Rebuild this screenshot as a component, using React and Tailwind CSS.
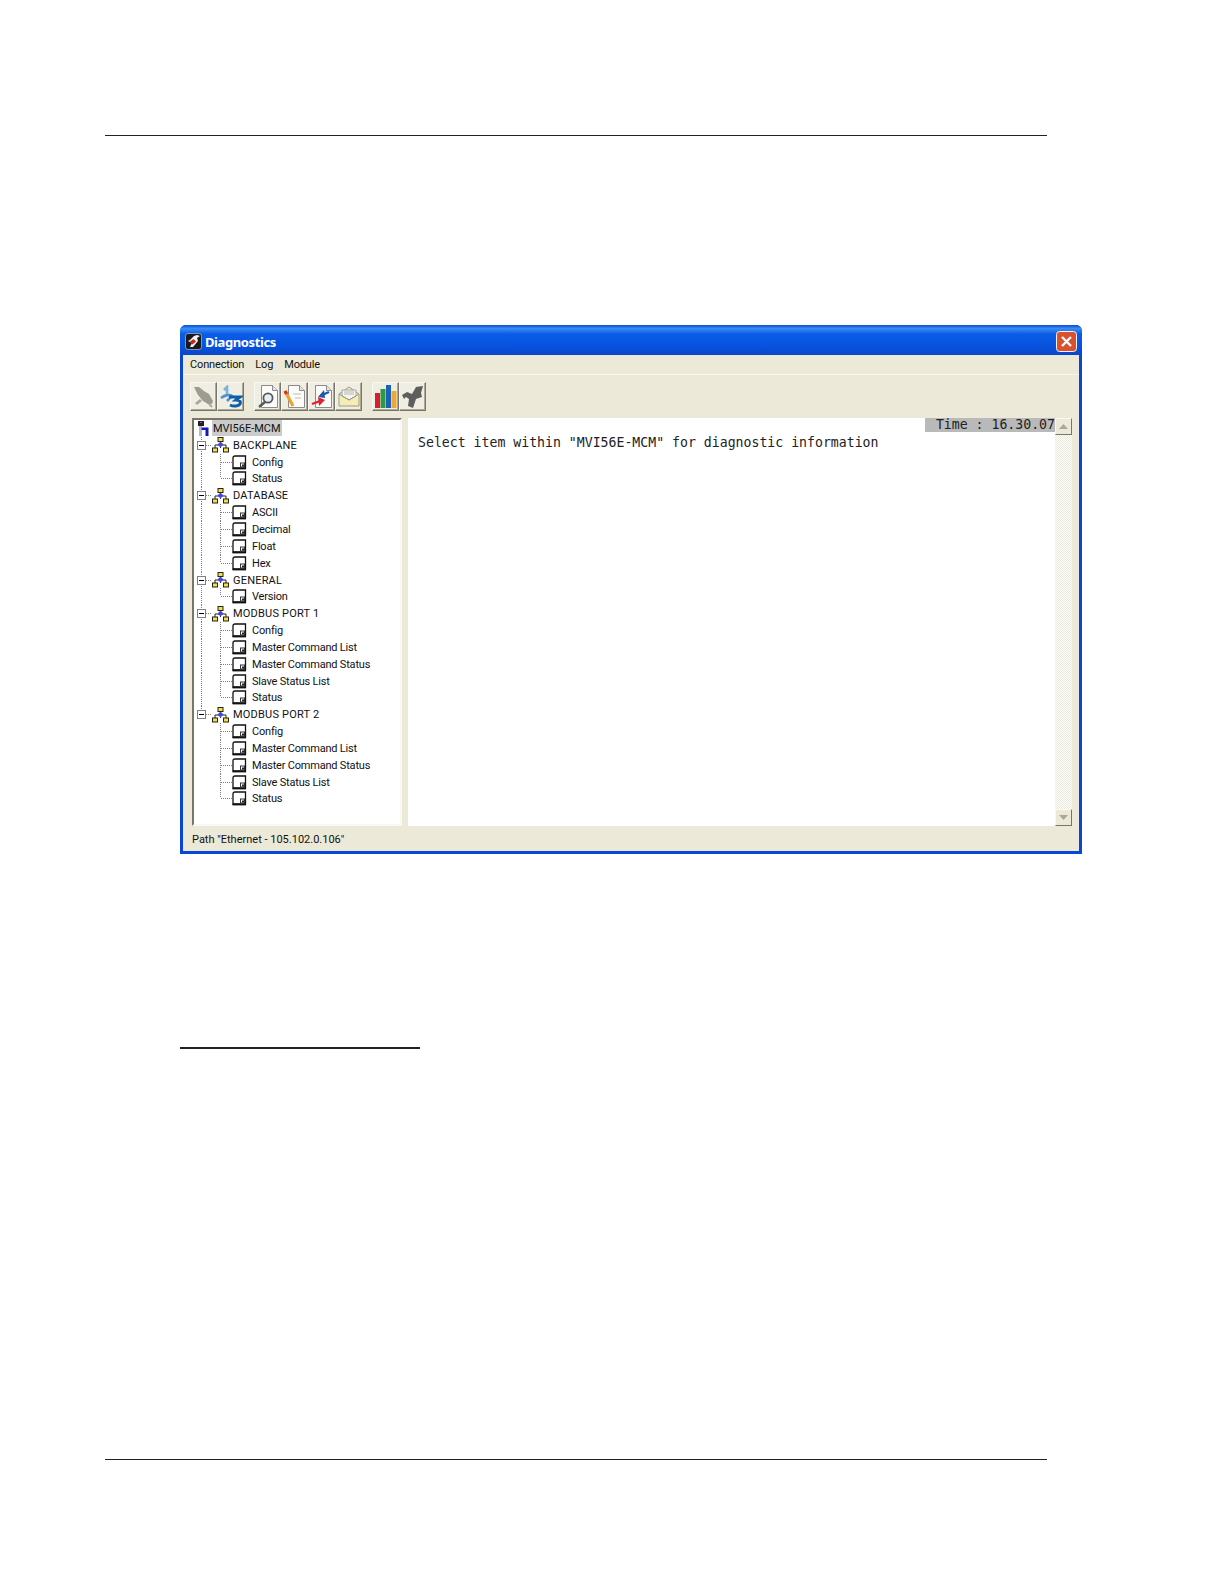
import React from "react";

const treeData = [
  { label: "BACKPLANE", children: ["Config", "Status"] },
  { label: "DATABASE", children: ["ASCII", "Decimal", "Float", "Hex"] },
  { label: "GENERAL", children: ["Version"] },
  {
    label: "MODBUS PORT 1",
    children: ["Config", "Master Command List", "Master Command Status", "Slave Status List", "Status"],
  },
  {
    label: "MODBUS PORT 2",
    children: ["Config", "Master Command List", "Master Command Status", "Slave Status List", "Status"],
  },
];

const DOT = { stroke: "#808080", strokeWidth: 1, strokeDasharray: "1 1" };

const TitleIcon = () => (
  <svg width="17" height="17" viewBox="0 0 17 17">
    <rect x="0.5" y="0.5" width="16" height="16" rx="2.5" fill="#1a1a1a" stroke="#c8d4ee" strokeWidth="0.6" />
    <path d="M3 8l2-1 4-4 3-1 3 1-3 2 1 3-5 6-3 0 2-4-2-1z" fill="#f4f4f4" />
    <path d="M5 8.5l3.5-2.5 2.5 2.5-3.5 3z" fill="#d0202a" />
  </svg>
);

const CloseIcon = () => (
  <svg width="21" height="21" viewBox="0 0 21 21">
    <rect x="0.5" y="0.5" width="20" height="20" rx="3" fill="#d9512f" stroke="#f4f4f4" />
    <path d="M6 6l9 9M15 6l-9 9" stroke="#fff" strokeWidth="2.4" />
  </svg>
);

const PlugIcon = () => (
  <svg width="24" height="24" viewBox="0 0 24 24">
    <path d="M2 2l5 0 5 4 5 3 4 7-1 3-4 0-5-3-5-6z" fill="#9c9c90" />
    <path d="M3 18l5-4 2 2-5 4z" fill="#a8a89c" />
    <path d="M17 19l3 3" stroke="#a8a89c" strokeWidth="2" />
  </svg>
);

const NumbersIcon = () => (
  <svg width="24" height="23" viewBox="0 0 24 23">
    <path d="M5 5l3-3v8" stroke="#7eb2dc" strokeWidth="2.6" fill="none" />
    <path d="M2 13c4-3 9-4 11-2l-5 5" stroke="#4c94d0" strokeWidth="2.6" fill="none" />
    <path d="M10 12h11l-4 3c4 0 5 2 4 4-1 2-6 3-10 1" stroke="#0d5ea8" strokeWidth="3" fill="none" />
  </svg>
);

const PageBase = ({ children }) => (
  <svg width="24" height="25" viewBox="0 0 24 25">
    <path d="M5.5 1.5h11l5 5v17h-16z" fill="#fbfbf8" stroke="#8a8a90" />
    <path d="M16.5 1.5v5h5" fill="#e4e4e0" stroke="#8a8a90" />
    {children}
  </svg>
);

const Toolbar = {
  plug: <PlugIcon />,
  numbers: <NumbersIcon />,
  search: (
    <PageBase>
      <circle cx="12" cy="14" r="4.6" fill="#e8eef2" stroke="#55585c" strokeWidth="1.8" />
      <path d="M9 18l-6 5" stroke="#55585c" strokeWidth="2.4" />
    </PageBase>
  ),
  note: (
    <PageBase>
      <path d="M2 7l8 15" stroke="#f0a030" strokeWidth="3.2" />
      <path d="M2 7l1.6 3" stroke="#d83020" strokeWidth="3.2" />
      <path d="M10 10h8M12 14h6" stroke="#b8b8b8" />
    </PageBase>
  ),
  transfer: (
    <PageBase>
      <path d="M19 8l-7 3" stroke="#1c5ab0" strokeWidth="2.4" />
      <path d="M8 13l6-7 1 8z" fill="#1c5ab0" />
      <path d="M2 20l8-3" stroke="#e02030" strokeWidth="2.4" />
      <path d="M15 16l-7-3 1 9z" fill="#e02030" />
    </PageBase>
  ),
  mail: (
    <svg width="24" height="23" viewBox="0 0 24 23">
      <path d="M2 9l10-7 10 7v12H2z" fill="#f4eeb4" stroke="#9a9a88" />
      <path d="M5 11V5h14v6l-7 4z" fill="#f4f4f0" stroke="#a8a8a0" />
      <path d="M7 7h10M7 9h10" stroke="#b8b8b8" />
      <path d="M2 9l10 6 10-6" fill="none" stroke="#9a9a88" />
    </svg>
  ),
  chart: (
    <svg width="24" height="25" viewBox="0 0 24 25">
      <rect x="1" y="9" width="5" height="15" fill="#d8202c" />
      <rect x="6.5" y="5" width="5" height="19" fill="#2c9a40" />
      <rect x="12" y="1" width="5" height="23" fill="#1c60b8" />
      <rect x="17.5" y="7" width="5" height="17" fill="#eea838" />
    </svg>
  ),
  wrench: (
    <svg width="24" height="24" viewBox="0 0 24 24">
      <path d="M1 10l5-3 5 2 4-7 7-1-2 7 1 4-6 2-3 9-5-2 1-7-3-2-2 2z" fill="#5e5e5c" />
    </svg>
  ),
};

const ToolButton = ({ icon }) => (
  <div className="w-[27px] h-[29px] flex items-center justify-center bg-[#f0eee2] border border-t-[#f8f8f2] border-l-[#f8f8f2] border-r-[#77766a] border-b-[#77766a] shadow-[inset_-1px_-1px_0_#aca899]">
    {Toolbar[icon]}
  </div>
);

const NetworkIcon = () => (
  <svg width="17" height="16" viewBox="0 0 17 16" className="shrink-0">
    <path d="M8.5 4v4M3 11V8h11v3M8.5 8v3" stroke="#222" fill="none" />
    <path d="M8.5 4.5l3 3-3 3-3-3z" fill="#4848d8" />
    <rect x="6" y="0.5" width="5" height="4" fill="#f4e040" stroke="#222" />
    <rect x="0.5" y="11" width="5" height="4" fill="#f4e040" stroke="#222" />
    <rect x="11.5" y="11" width="5" height="4" fill="#f4e040" stroke="#222" />
  </svg>
);

const DocIcon = () => (
  <svg width="15" height="15" viewBox="0 0 15 15" className="shrink-0">
    <path d="M1 3q0-2 2-2h10.5v12H1z" fill="#fff" stroke="#111" strokeWidth="1.3" />
    <path d="M0.5 13.5h13.5" stroke="#111" strokeWidth="1.8" />
    <rect x="8.5" y="8" width="4" height="4" fill="#fff" stroke="#333" />
    <rect x="10" y="9.5" width="2" height="2" fill="#222" />
  </svg>
);

const RootIcon = () => (
  <svg width="12" height="15" viewBox="0 0 12 15" className="shrink-0">
    <rect x="0" y="0" width="6" height="5" fill="#222" />
    <rect x="2" y="1" width="2" height="1" fill="#d04040" />
    <rect x="1" y="5" width="3" height="10" fill="#b8b8cc" />
    <path d="M3.5 6.5h7v8.5H7.5v-6h-4z" fill="#1818b8" />
  </svg>
);

// dotted connectors live in the row's own indent column
const GroupRow = ({ label, last }) => (
  <div className="flex items-center h-[16.85px]">
    <div className="relative w-[18px] h-full shrink-0">
      <svg width="18" height="17" className="absolute left-0 top-0 overflow-visible">
        <path d={last ? "M7.5 0V8" : "M7.5 0V17"} {...DOT} />
        <path d="M12 8.5h6" {...DOT} />
      </svg>
      <div className="absolute left-[3px] top-[4px] w-[9px] h-[9px] bg-white border border-[#808080] flex items-center justify-center">
        <div className="w-[5px] h-px bg-black" />
      </div>
    </div>
    <NetworkIcon />
    <span className="ml-[4px] whitespace-nowrap tracking-[0.2px]">{label}</span>
  </div>
);

const ChildRow = ({ label, lastChild, lastGroup }) => (
  <div className="flex items-center h-[16.85px]">
    <svg width="38" height="17" className="shrink-0">
      {!lastGroup && <path d="M7.5 0V17" {...DOT} />}
      <path d={lastChild ? "M26.5 0V8" : "M26.5 0V17"} {...DOT} />
      <path d="M27 8.5h11" {...DOT} />
    </svg>
    <DocIcon />
    <span className="ml-[5px] whitespace-nowrap tracking-[-0.2px]">{label}</span>
  </div>
);

const Tree = () => (
  <div className="w-[210px] h-[408px] bg-white border-t-2 border-l-2 border-t-[#77766a] border-l-[#77766a] border-r-2 border-b-2 border-r-[#f8f8f4] border-b-[#f8f8f4] text-[11px] leading-none text-[#111] font-['Roboto',sans-serif]">
    <div className="flex items-center h-[16.85px] pl-[4px]">
      <RootIcon />
      <span className="ml-[2px] h-[16px] flex items-center px-[1px] bg-[#cbcbcb] whitespace-nowrap">MVI56E-MCM</span>
    </div>
    {treeData.map((group, g) => (
      <div key={group.label + g}>
        <GroupRow label={group.label} last={g === treeData.length - 1} />
        {group.children.map((child, i) => (
          <ChildRow
            key={child + i}
            label={child}
            lastChild={i === group.children.length - 1}
            lastGroup={g === treeData.length - 1}
          />
        ))}
      </div>
    ))}
  </div>
);

const ScrollButton = ({ up }) => (
  <div className="w-[17px] h-[17px] flex items-center justify-center bg-[#ece9d8] border border-t-[#f8f8f2] border-l-[#f8f8f2] border-r-[#77766a] border-b-[#77766a] shrink-0">
    <svg width="9" height="5" viewBox="0 0 9 5">
      <path d={up ? "M4.5 0L9 5H0z" : "M0 0h9L4.5 5z"} fill="#aca899" />
    </svg>
  </div>
);

const OutputPane = () => (
  <div className="relative flex-1 h-[408px] bg-white flex">
    <div className="flex-1 pl-[10px] pt-[17px] font-['DejaVu_Sans_Mono',monospace] text-[13.2px] leading-[16px] text-[#222] whitespace-pre">
      Select item within "MVI56E-MCM" for diagnostic information
    </div>
    <div className="absolute right-[17px] top-0 w-[130px] h-[14px] bg-[#b9b9b9] font-['DejaVu_Sans_Mono',monospace] text-[13.2px] leading-[14px] text-right text-[#222] whitespace-pre">
      Time : 16.30.07
    </div>
    <div className="w-[17px] flex flex-col bg-[repeating-conic-gradient(#ece9d8_0%_25%,#ffffff_0%_50%)] bg-[length:2px_2px]">
      <ScrollButton up />
      <div className="flex-1" />
      <ScrollButton />
    </div>
  </div>
);

const DiagnosticsWindow = () => (
  <div className="w-[902px] h-[529px] ml-[180px] mt-[189px] flex flex-col rounded-t-[6px] bg-[#0a3fd0] border-x-[3px] border-b-[3px] border-[#0a46d6]">
    <div className="h-[30px] -mx-[3px] px-[5px] pt-[2px] flex items-center justify-between rounded-t-[6px] bg-[linear-gradient(to_bottom,#0a4ad0_0%,#3a8cf4_12%,#0a5ce6_30%,#0653de_70%,#0a48c8_100%)]">
      <div className="flex items-center gap-[3px]">
        <TitleIcon />
        <span className="pt-[4px] text-white text-[13px] tracking-[-0.4px] font-bold font-['Noto_Sans',sans-serif]">Diagnostics</span>
      </div>
      <CloseIcon />
    </div>
    <div className="flex-1 bg-[#ece9d8] flex flex-col">
      <div className="h-[20px] pl-[7px] pt-[2px] flex items-center gap-[11px] border-b border-b-[#f8f8f2] text-[11px] tracking-[-0.15px] text-[#111] font-['Roboto',sans-serif]">
        <span>Connection</span>
        <span>Log</span>
        <span>Module</span>
      </div>
      <div className="h-[43px] pl-[7px] pt-[7px] flex items-start">
        <ToolButton icon="plug" />
        <ToolButton icon="numbers" />
        <div className="w-[10px]" />
        <ToolButton icon="search" />
        <ToolButton icon="note" />
        <ToolButton icon="transfer" />
        <ToolButton icon="mail" />
        <div className="w-[10px]" />
        <ToolButton icon="chart" />
        <ToolButton icon="wrench" />
      </div>
      <div className="flex pl-[9px] pr-[7px] gap-[6px]">
        <Tree />
        <OutputPane />
      </div>
      <div className="flex-1 pl-[9px] pt-[4px] flex items-center text-[11px] text-[#111] font-['Roboto',sans-serif]">
        Path "Ethernet - 105.102.0.106"
      </div>
    </div>
  </div>
);

export default function App() {
  return (
    <div className="h-[1584px] bg-white pt-[135px]">
      <div className="ml-[105px] w-[942px] h-px bg-[#222]" />
      <DiagnosticsWindow />
      <div className="ml-[180px] mt-[193px] w-[240px] h-[2px] bg-[#222]" />
      <div className="ml-[105px] mt-[410px] w-[942px] h-px bg-[#222]" />
    </div>
  );
}
